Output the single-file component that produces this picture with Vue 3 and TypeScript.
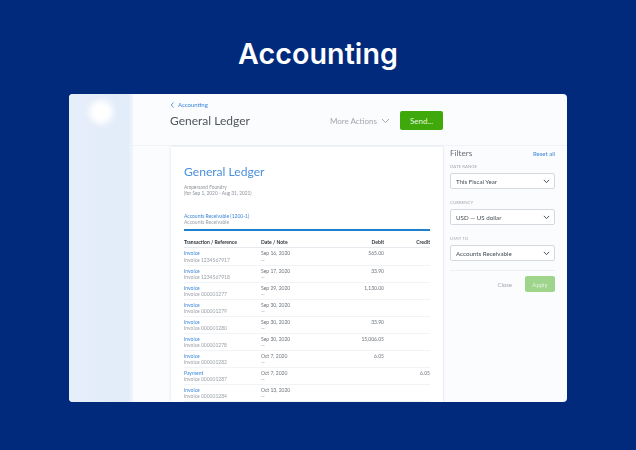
<script setup lang="ts">
interface LedgerRow {
  kind: string;
  reference: string;
  date: string;
  note: string;
  debit: string;
  credit: string;
}

const rows: LedgerRow[] = [
  { kind: "Invoice", reference: "Invoice 1234567917", date: "Sep 16, 2020", note: "—", debit: "565.00", credit: "" },
  { kind: "Invoice", reference: "Invoice 1234567918", date: "Sep 17, 2020", note: "—", debit: "33.90", credit: "" },
  { kind: "Invoice", reference: "Invoice 000001277", date: "Sep 29, 2020", note: "—", debit: "1,130.00", credit: "" },
  { kind: "Invoice", reference: "Invoice 000001279", date: "Sep 30, 2020", note: "—", debit: "", credit: "" },
  { kind: "Invoice", reference: "Invoice 000001280", date: "Sep 30, 2020", note: "—", debit: "33.90", credit: "" },
  { kind: "Invoice", reference: "Invoice 000001278", date: "Sep 30, 2020", note: "—", debit: "15,006.05", credit: "" },
  { kind: "Invoice", reference: "Invoice 000001282", date: "Oct 7, 2020", note: "—", debit: "6.05", credit: "" },
  { kind: "Payment", reference: "Invoice 000001287", date: "Oct 7, 2020", note: "—", debit: "", credit: "6.05" },
  { kind: "Invoice", reference: "Invoice 000001284", date: "Oct 13, 2020", note: "—", debit: "", credit: "" },
];

const filters = [
  { label: "DATE RANGE", value: "This Fiscal Year" },
  { label: "CURRENCY", value: "USD — US dollar" },
  { label: "LIMIT TO", value: "Accounts Receivable" },
];
</script>

<template>
  <div class="page">
    <h1 class="headline">Accounting</h1>
    <div class="window">
      <aside class="sidebar">
        <div class="logo"></div>
      </aside>
      <div class="main">
        <header class="topbar">
          <div>
            <a class="back">
              <svg width="5" height="6" viewBox="0 0 5 6"><path d="M3.6 .6 1.2 3l2.4 2.4" fill="none" stroke="#3b87d8" stroke-width=".9" /></svg>
              Accounting
            </a>
            <div class="page-title">General Ledger</div>
          </div>
          <div class="actions">
            <span class="more">
              More Actions
              <svg width="9" height="6" viewBox="0 0 9 6"><path d="M1 1l3.5 3.6L8 1" fill="none" stroke="#a2a7ad" stroke-width="1" /></svg>
            </span>
            <button class="send">Send...</button>
          </div>
        </header>
        <div class="content">
          <section class="doc">
            <h2 class="doc-title">General Ledger</h2>
            <div class="doc-meta">Ampersand Foundry</div>
            <div class="doc-meta">(for Sep 1, 2020 - Aug 31, 2021)</div>
            <div class="account">
              <a class="link">Accounts Receivable (1200-1)</a>
              <div class="muted">Accounts Receivable</div>
            </div>
            <div class="row head">
              <div>Transaction / Reference</div>
              <div>Date / Note</div>
              <div class="num">Debit</div>
              <div class="num">Credit</div>
            </div>
            <div v-for="row in rows" :key="row.reference" class="row">
              <div>
                <a class="link">{{ row.kind }}</a>
                <div class="muted">{{ row.reference }}</div>
              </div>
              <div>
                <div class="value">{{ row.date }}</div>
                <div class="muted">{{ row.note }}</div>
              </div>
              <div class="num value">{{ row.debit }}</div>
              <div class="num value">{{ row.credit }}</div>
            </div>
          </section>
          <aside class="filters">
            <div class="filters-head">
              <span class="filters-title">Filters</span>
              <a class="reset">Reset all</a>
            </div>
            <div v-for="filter in filters" :key="filter.label" class="filter">
              <div class="filter-label">{{ filter.label }}</div>
              <div class="select">
                {{ filter.value }}
                <svg width="7" height="5" viewBox="0 0 7 5"><path d="M.8.9l2.7 2.7L6.2.9" fill="none" stroke="#4a5058" stroke-width="1" /></svg>
              </div>
            </div>
            <div class="filter-actions">
              <span class="close">Close</span>
              <button class="apply">Apply</button>
            </div>
          </aside>
        </div>
      </div>
    </div>
  </div>
</template>

<style>
body {
  margin: 0;
  background: #012a7c;
}
</style>

<style scoped>
.page {
  width: 636px;
  height: 450px;
  box-sizing: border-box;
  overflow: hidden;
  padding-top: 36px;
  background: #012a7c;
  font-family: Lato, "Liberation Sans", sans-serif;
}

.headline {
  margin: 0;
  height: 58px;
  color: #fff;
  font-family: Inter, sans-serif;
  font-size: 28.6px;
  line-height: 35px;
  font-weight: 600;
  text-align: center;
  letter-spacing: 0.1px;
}

.window {
  display: flex;
  width: 498px;
  height: 308px;
  margin-left: 69px;
  overflow: hidden;
  border-radius: 4px;
  background: #fbfcfe;
}

.sidebar {
  flex: 0 0 64px;
  background: linear-gradient(90deg, #e6eefa 0%, #e1ecf9 92%, #f2f6fc 100%);
}

.logo {
  width: 24px;
  height: 24px;
  margin: 6px 0 0 20px;
  border-radius: 50%;
  background: #fff;
  filter: blur(3px);
}

.main {
  flex: 1;
  min-width: 0;
  display: flex;
  flex-direction: column;
}

.topbar {
  display: flex;
  justify-content: space-between;
  align-items: flex-start;
  height: 52px;
  box-sizing: border-box;
  padding: 5px 124px 0 37px;
  border-bottom: 1px solid #eff2f6;
  filter: blur(0.3px);
}

.back {
  display: flex;
  align-items: center;
  gap: 3px;
  height: 9px;
  margin-top: 1px;
  color: #3b87d8;
  font-size: 6px;
}

.page-title {
  margin-top: 4px;
  color: #50565d;
  font-size: 12px;
  line-height: 16px;
}

.actions {
  display: flex;
  align-items: center;
  margin-top: 12px;
}

.more {
  display: flex;
  align-items: center;
  gap: 4px;
  margin-right: 10px;
  color: #a2a7ad;
  font-size: 8px;
}

.send {
  width: 43px;
  height: 19px;
  padding: 0;
  border: 0;
  border-radius: 2px;
  background: #3fa80b;
  color: #e6f5dd;
  font-family: inherit;
  font-size: 8px;
}

.content {
  flex: 1;
  min-height: 0;
  display: flex;
  padding-left: 38px;
}

.doc {
  width: 272px;
  box-sizing: border-box;
  margin-top: 1px;
  padding: 18px 13px 0;
  background: #fff;
  box-shadow: 0 0 3px rgba(90, 110, 140, 0.18);
  filter: blur(0.35px);
}

.doc-title {
  margin: 0 0 5px;
  color: #4a90dc;
  font-size: 12.1px;
  line-height: 14px;
  font-weight: 400;
}

.doc-meta {
  color: #8d939a;
  font-size: 4.8px;
  line-height: 6px;
}

.account {
  margin-top: 17px;
  padding-bottom: 3.5px;
  border-bottom: 2px solid #1f7fd0;
}

.link {
  display: block;
  color: #3b87d8;
  font-size: 5px;
  line-height: 6.2px;
}

.muted {
  color: #9ba1a7;
  font-size: 5px;
  line-height: 6.2px;
}

.value {
  color: #6f757c;
  font-size: 5px;
  line-height: 6.2px;
}

.row {
  display: grid;
  grid-template-columns: 77px 1fr 46px 46px;
  height: 17.1px;
  box-sizing: border-box;
  padding-top: 2px;
  border-bottom: 1px solid #f1f3f6;
}

.row.head {
  height: 17.5px;
  padding-top: 8.5px;
  border-bottom: 1px solid #e6e9ee;
  color: #2e343b;
  font-size: 5px;
  line-height: 6.2px;
  font-weight: 700;
}

.num {
  text-align: right;
}

.filters {
  width: 124px;
  box-sizing: border-box;
  padding: 1px 12px 0 7px;
  box-shadow: inset 1px 0 0 #eceff3;
  filter: blur(0.3px);
}

.filters-head {
  display: flex;
  justify-content: space-between;
  align-items: center;
  height: 12px;
}

.filters-title {
  color: #666c73;
  font-size: 8.2px;
}

.reset {
  color: #3b87d8;
  font-size: 6px;
}

.filter {
  margin-top: 5px;
}

.filter + .filter {
  margin-top: 11px;
}

.filter-label {
  height: 7px;
  color: #a6abb1;
  font-size: 4.4px;
  line-height: 6px;
}

.select {
  display: flex;
  justify-content: space-between;
  align-items: center;
  height: 16px;
  box-sizing: border-box;
  margin-top: 2px;
  padding: 0 4px 0 5px;
  border: 1px solid #d5d9df;
  border-radius: 2px;
  background: #fff;
  color: #454b52;
  font-size: 6.2px;
}

.filter-actions {
  display: flex;
  justify-content: flex-end;
  align-items: center;
  gap: 13px;
  margin-top: 9px;
  padding-top: 5px;
  border-top: 1px solid #eef0f4;
}

.close {
  color: #a2a7ad;
  font-size: 6px;
}

.apply {
  width: 30px;
  height: 16px;
  padding: 0;
  border: 0;
  border-radius: 2px;
  background: #9fd48c;
  color: #e2f3da;
  font-family: inherit;
  font-size: 6px;
}
</style>
